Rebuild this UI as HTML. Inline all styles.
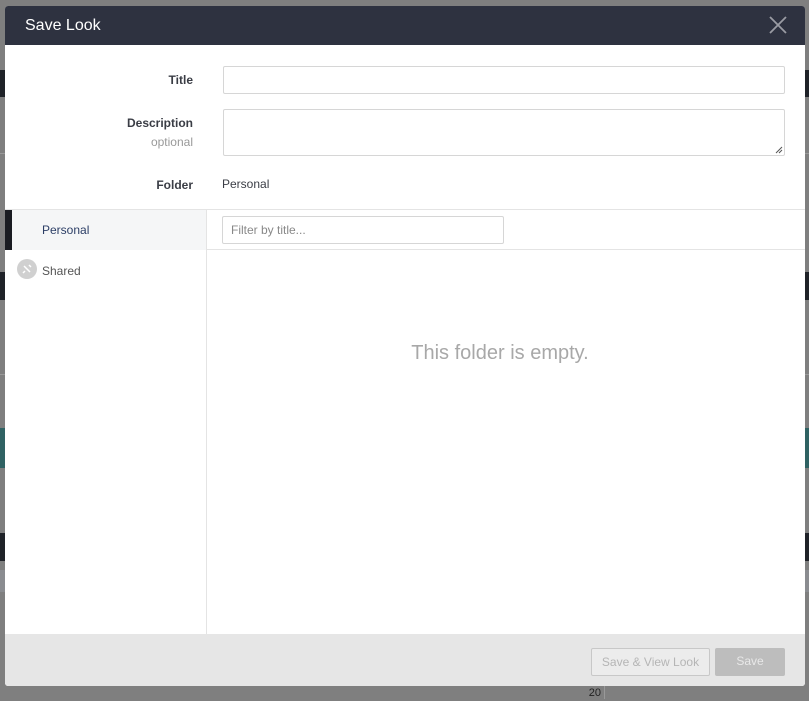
<!DOCTYPE html>
<html><head><meta charset="utf-8"><style>
*{box-sizing:border-box;margin:0;padding:0}
body{width:809px;height:699px;background:#7f7f7f;position:relative;overflow:hidden;font-family:"Liberation Sans",Arial,sans-serif;color:#3a3d45}
.band{position:absolute;left:0;width:809px}
.modal{position:absolute;left:5px;top:6px;width:800px;height:680px;background:#fff;border-radius:3px;overflow:hidden}
.hdr{height:39px;background:#2e3240;color:#fff;font-size:16px;line-height:39px;padding-left:20px}
.x{position:absolute;right:18px;top:10px}
.lbl{position:absolute;right:612px;font-size:12px;font-weight:bold;color:#3a3d45;text-align:right}
.inp{position:absolute;left:218px;width:562px;border:1px solid #d6d6d6;border-radius:2px;background:#fff}
.side{position:absolute;left:0;top:203px;width:202px;height:425px;border-right:1px solid #e4e4e4}
.foot{position:absolute;left:0;top:628px;width:800px;height:52px;background:#e6e6e6}
.btn{position:absolute;top:14px;height:28px;font-size:12px;line-height:26px;text-align:center;border-radius:2px}
</style></head><body>
<div class="band" style="top:70px;height:27px;background:#1f2228"></div>
<div class="band" style="top:153px;height:1px;background:#999"></div>
<div class="band" style="top:272px;height:28px;background:#1f2228"></div>
<div class="band" style="top:374px;height:1px;background:#999"></div>
<div class="band" style="top:428px;height:40px;background:#2f6263"></div>
<div class="band" style="top:533px;height:28px;background:#1f2228"></div>
<div class="band" style="top:570px;height:22px;background:#8a8c90"></div>
<div style="position:absolute;left:585px;top:686px;width:20px;height:13px;border-right:1px solid #999;font-size:11px;color:#222;text-align:right;padding-right:3px;line-height:15px">20</div>
<div class="modal">
<div class="hdr">Save Look</div>
<svg class="x" width="18" height="18" viewBox="0 0 18 18"><path d="M1 1L17 17M17 1L1 17" stroke="#9a9ca3" stroke-width="1.8"/></svg>
<div class="lbl" style="top:67px">Title</div>
<div class="inp" style="top:60px;height:28px"></div>
<div class="lbl" style="top:110px">Description</div>
<div class="lbl" style="top:129px;font-weight:normal;color:#999">optional</div>
<div class="inp" style="top:103px;height:47px"><svg style="position:absolute;right:1px;bottom:1px" width="8" height="8"><path d="M7 1L1 7M7 4L4 7" stroke="#555" stroke-width="1"/></svg></div>
<div class="lbl" style="top:172px">Folder</div>
<div style="position:absolute;left:217px;top:171px;font-size:12px">Personal</div>
<div style="position:absolute;left:0;top:203px;width:800px;height:1px;background:#e4e4e4"></div>
<div style="position:absolute;left:202px;top:243px;width:598px;height:1px;background:#e4e4e4"></div>
<div class="side">
<div style="position:absolute;left:0;top:1px;width:201px;height:40px;background:#f5f6f7;border-left:7px solid #1a1c22"></div>
<div style="position:absolute;left:37px;top:14px;font-size:12px;color:#2c3e66">Personal</div>
<div style="position:absolute;left:12px;top:50px;width:20px;height:20px;border-radius:50%;background:#d0d0d0"><svg width="20" height="20"><path d="M7 7L13 13M12 6L14 8M8 12L6 14" stroke="#fff" stroke-width="1.5"/></svg></div>
<div style="position:absolute;left:37px;top:55px;font-size:12px;color:#555">Shared</div>
</div>
<div class="inp" style="left:217px;top:210px;width:282px;height:28px;font-size:12px;color:#888;line-height:26px;padding-left:8px">Filter by title...</div>
<div style="position:absolute;left:196px;top:336px;width:598px;text-align:center;font-size:20px;color:#a8a8a8">This folder is empty.</div>
<div class="foot">
<div class="btn" style="left:586px;width:119px;border:1px solid #c8c8c8;background:#ececec;color:#b5b5b5">Save &amp; View Look</div>
<div class="btn" style="left:710px;width:70px;background:#bdbdbd;color:#e8e8e8">Save</div>
</div>
</div>
</body></html>
